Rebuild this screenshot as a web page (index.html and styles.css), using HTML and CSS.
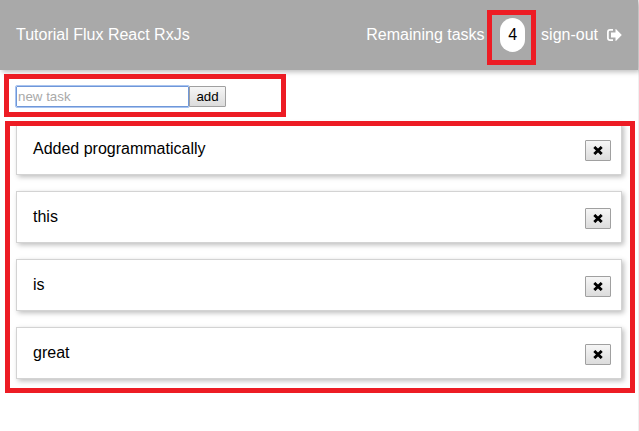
FILE: index.html
```
<!DOCTYPE html>
<html lang="en">
<head>
<meta charset="utf-8">
<title>Tutorial Flux React RxJs</title>
<link rel="stylesheet" href="styles.css">
</head>
<body>
<div class="page">
  <header class="header">
    <span>Tutorial Flux React RxJs</span>
    <div class="status">
      <span>Remaining tasks</span>
      <span class="count">4<i class="mark mark-count"></i></span>
      <span>sign-out</span>
      <svg class="exit" width="15" height="12" viewBox="0 0 15 12"><path d="M6 .9H3Q.9 .9 .9 3V9Q.9 11.1 3 11.1H6" fill="none" stroke="#fff" stroke-width="1.7"/><path d="M4 3.5H8.5V.2Q8.8 0 9.2 .3L14.8 6 9.2 11.7Q8.8 12 8.5 11.8V8.5H4Z" fill="#fff"/></svg>
    </div>
  </header>
  <form class="new-task">
    <input class="field" type="text" placeholder="new task"><button class="btn add" type="button">add</button>
    <i class="mark mark-form"></i>
  </form>
  <div class="list">
    <div class="card"><span>Added programmatically</span><button class="btn remove" type="button"><svg width="10" height="9" viewBox="0 0 10 9"><path d="M1.3 1 8.7 8M8.7 1 1.3 8" stroke="#000" stroke-width="2.9"/></svg></button></div>
    <div class="card"><span>this</span><button class="btn remove" type="button"><svg width="10" height="9" viewBox="0 0 10 9"><path d="M1.3 1 8.7 8M8.7 1 1.3 8" stroke="#000" stroke-width="2.9"/></svg></button></div>
    <div class="card"><span>is</span><button class="btn remove" type="button"><svg width="10" height="9" viewBox="0 0 10 9"><path d="M1.3 1 8.7 8M8.7 1 1.3 8" stroke="#000" stroke-width="2.9"/></svg></button></div>
    <div class="card"><span>great</span><button class="btn remove" type="button"><svg width="10" height="9" viewBox="0 0 10 9"><path d="M1.3 1 8.7 8M8.7 1 1.3 8" stroke="#000" stroke-width="2.9"/></svg></button></div>
    <i class="mark mark-list"></i>
  </div>
</div>
</body>
</html>
```
FILE: styles.css
```
* { box-sizing: border-box; }
body {
  margin: 0;
  background: #fff;
  color: #000;
  font: 16px/18px "Liberation Sans", Arial, sans-serif;
  overflow: hidden;
}
.page {
  height: 431px;
  border-right: 1px solid #f0f0f0;
}
.header {
  height: 70px;
  padding: 0 16px;
  display: flex;
  align-items: center;
  justify-content: space-between;
  background: #a9a9a9;
  color: #fff;
  box-shadow: 2px 2px 5px rgba(0, 0, 0, .26);
}
.status { display: flex; align-items: center; }
.count {
  position: relative;
  width: 25px;
  height: 34px;
  margin: 0 16px 0 15.5px;
  border-radius: 12.5px;
  background: #fff;
  color: #000;
  line-height: 34px;
  text-align: center;
}
.exit { margin-left: 9px; }
.new-task {
  position: relative;
  display: flex;
  height: 53px;
  padding: 16px 16px 0;
}
.field {
  width: 173px;
  height: 21px;
  padding: 0 1px;
  border: 1px solid #6f97d9;
  border-radius: 1px;
  outline: 1px solid #a9c4f0;
  font: 13.333px "Liberation Sans", Arial, sans-serif;
}
.field::placeholder { color: #a9a9a9; opacity: 1; }
.btn {
  height: 21px;
  padding: 0;
  border: 1px solid #a0a0a0;
  border-radius: 1px;
  background: linear-gradient(#f6f6f6, #dcdcdc);
  color: #000;
  font: 13.333px "Liberation Sans", Arial, sans-serif;
}
.add { width: 37px; }
.list {
  position: relative;
  display: flex;
  flex-direction: column;
  gap: 16px;
  padding: 0 16px;
}
.card {
  height: 52px;
  padding: 16px 10px 0 16px;
  display: flex;
  align-items: flex-start;
  justify-content: space-between;
  border: 1px solid #d3d3d3;
  box-shadow: 2px 2px 5px rgba(0, 0, 0, .26);
}
.remove {
  width: 26px;
  display: flex;
  align-items: center;
  justify-content: center;
}
.mark {
  position: absolute;
  border: 5px solid #ed1c24;
  pointer-events: none;
}
.mark-count { left: -13px; top: -8px; width: 49px; height: 55px; }
.mark-form { left: 4px; top: 4px; width: 282px; height: 43px; }
.mark-list { left: 5px; top: -2px; width: 630px; height: 272px; }
```
